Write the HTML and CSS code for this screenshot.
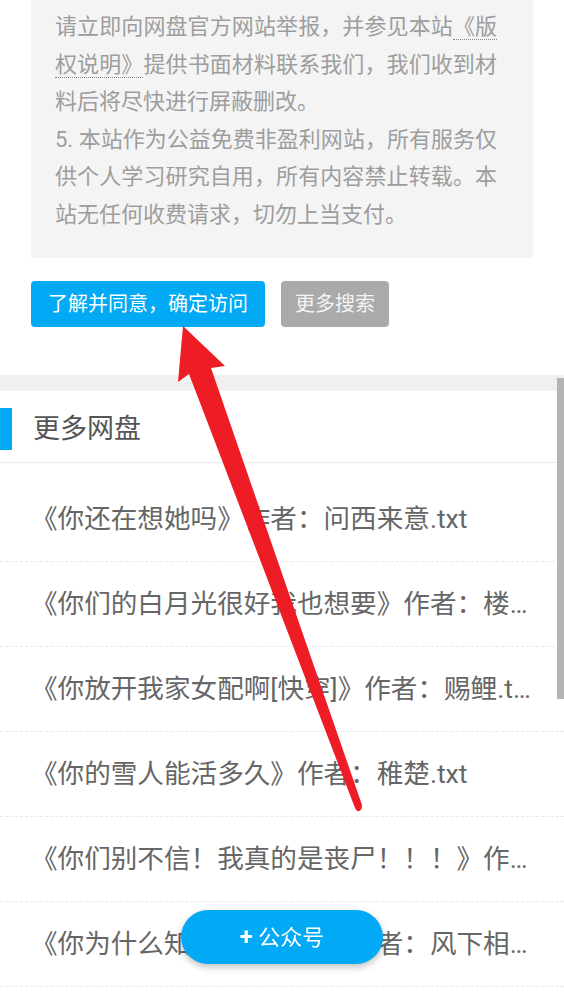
FILE: index.html
```html
<!DOCTYPE html>
<html lang="zh-CN">
<head>
    <meta charset="UTF-8">
    <meta name="viewport" content="width=device-width, initial-scale=1.0">
    <title>网盘资源</title>
    <link rel="stylesheet" href="styles.css">
</head>
<body>
    <!-- Notice box -->
    <div class="notice">
        <p>请立即向网盘官方网站举报，并参见本站<a class="notice-link" href="#">《版权说明》</a>提供书面材料联系我们，我们收到材料后将尽快进行屏蔽删改。<br>5. 本站作为公益免费非盈利网站，所有服务仅供个人学习研究自用，所有内容禁止转载。本站无任何收费请求，切勿上当支付。</p>
    </div>

    <div class="actions">
        <a class="btn btn-primary" href="#">了解并同意，确定访问</a>
        <a class="btn btn-gray" href="#">更多搜索</a>
    </div>

    <!-- More links -->
    <div class="section">
        <div class="section-head">
            <h2>更多网盘</h2>
        </div>
        <ul class="link-list">
            <li><a href="#">《你还在想她吗》作者：问西来意.txt</a></li>
            <li><a href="#">《你们的白月光很好我也想要》作者：楼见月.txt</a></li>
            <li><a href="#">《你放开我家女配啊[快穿]》作者：赐鲤.txt</a></li>
            <li><a href="#">《你的雪人能活多久》作者：稚楚.txt</a></li>
            <li><a href="#">《你们别不信！我真的是丧尸！！！》作者：木子.txt</a></li>
            <li><a href="#">《你为什么知道我喜欢你》作者：风下相.txt</a></li>
        </ul>
    </div>

    <a class="follow-btn" href="#"><b>+</b> 公众号</a>

    <div class="scroll-thumb"></div>

    <!-- Red annotation arrow -->
    <svg class="arrow" width="564" height="1004" viewBox="0 0 564 1004">
        <path d="M183 326 L225 366 L211 368 L362 805 Q362 812 357 811 L355 808 L189 374 L178 382 Z" fill="#ee1c25"/>
    </svg>
</body>
</html>
```

FILE: styles.css
```css
:root {
    --blue: #02a9f4;
    --gray-btn: #aaaaaa;
    --notice-bg: #f4f4f4;
}

body {
    font-family: Roboto, "Noto Sans CJK SC", sans-serif;
    margin: 0;
    padding: 0;
    background-color: white;
    color: #666;
}

a {
    text-decoration: none;
    color: inherit;
}

.notice {
    margin: 0 31px;
    padding: 8px 36px 24px 24px;
    background-color: var(--notice-bg);
}

.notice p {
    margin: 0;
    font-size: 22px;
    line-height: 37.6px;
    color: #9d9d9d;
    text-align: justify;
}

.notice-link {
    border-bottom: 1px dotted #888;
}

.actions {
    display: flex;
    gap: 16px;
    margin: 23px 31px 0;
}

.btn {
    display: block;
    height: 46px;
    line-height: 46px;
    padding: 0 16px;
    font-size: 20px;
    color: white;
    border-radius: 4px;
}

.btn-primary {
    background-color: var(--blue);
    padding: 0 17px;
}

.btn-gray {
    background-color: var(--gray-btn);
    color: #f4f4f4;
    padding: 0 14px;
}

.section {
    margin-top: 48px;
    border-top: 16px solid #f0f0f0;
}

.section-head {
    padding: 17px 0 12px;
    border-bottom: 1px solid #ececec;
}

.section-head h2 {
    margin: 0;
    height: 42px;
    line-height: 42px;
    padding-left: 21px;
    border-left: 12px solid var(--blue);
    font-size: 27px;
    font-weight: normal;
    color: #555;
}

.link-list {
    list-style: none;
    margin: 0;
    padding: 14px 0 0;
}

.link-list li {
    height: 84px;
    border-bottom: 1px dashed #e8e8e8;
}

.link-list a {
    display: block;
    padding: 0 30px 0 31px;
    line-height: 84px;
    font-size: 26.6px;
    color: #666;
    white-space: nowrap;
    overflow: hidden;
    text-overflow: ellipsis;
}

.follow-btn {
    position: fixed;
    left: 50%;
    bottom: 40px;
    transform: translateX(-50%);
    width: 202px;
    height: 54px;
    line-height: 54px;
    border-radius: 27px;
    background-color: var(--blue);
    color: white;
    font-size: 22px;
    text-align: center;
    box-shadow: 0 3px 7px rgba(0, 0, 0, 0.25);
}

.follow-btn b {
    font-size: 24px;
}

.scroll-thumb {
    position: fixed;
    top: 378px;
    right: 0;
    width: 7px;
    height: 321px;
    background-color: #b4b4b4;
}

.arrow {
    position: absolute;
    top: 0;
    left: 0;
    pointer-events: none;
}
```
